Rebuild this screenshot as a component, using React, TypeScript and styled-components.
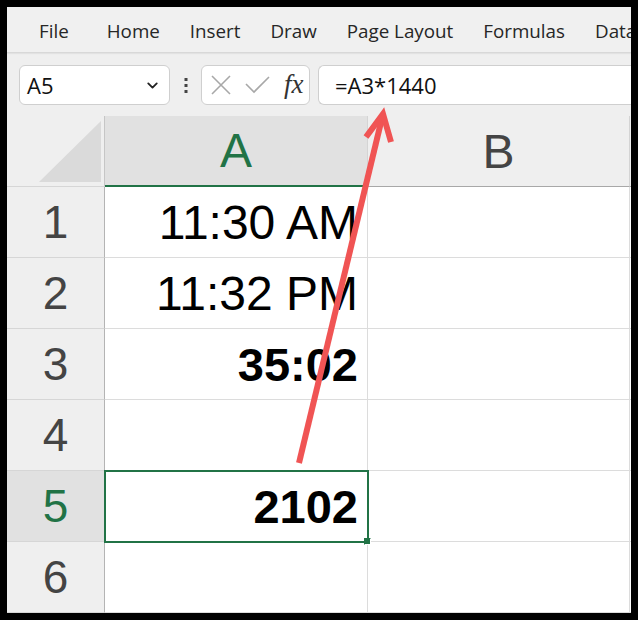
import React from 'react';
import styled, { createGlobalStyle } from 'styled-components';
import { ChevronDown } from 'lucide-react';

const Global = createGlobalStyle`
  html, body { margin: 0; padding: 0; background: #000; }
  * { box-sizing: border-box; }
`;

const Page = styled.div({
  position: 'relative',
  width: '638px',
  height: '620px',
  overflow: 'hidden',
});

const Frame = styled.div({
  width: '638px',
  height: '620px',
  border: '7px solid #000',
  background: '#efefef',
  display: 'flex',
  flexDirection: 'column',
  overflow: 'hidden',
});

const Tabs = styled.div({
  height: '46px',
  display: 'flex',
  alignItems: 'center',
  gap: '30px',
  paddingLeft: '32px',
  paddingTop: '2px',
  background: '#f0f0f0',
  borderBottom: '1px solid #d8d8d8',
  boxShadow: '0 1px 1px rgba(0,0,0,0.05)',
  whiteSpace: 'nowrap',
  fontFamily: '"Open Sans", "Noto Sans", sans-serif',
  fontSize: '18.8px',
  color: '#262626',
  flexShrink: 0,
});

const Tab = styled.span<{ $first?: boolean }>(p => ({
  marginRight: p.$first ? '8px' : 0,
}));

const FormulaBar = styled.div({
  height: '63px',
  display: 'flex',
  alignItems: 'flex-start',
  paddingTop: '12px',
  paddingLeft: '12px',
  flexShrink: 0,
});

const Field = styled.div<{ $w?: number }>(p => ({
  height: '40px',
  width: p.$w ? `${p.$w}px` : 'auto',
  flex: p.$w ? 'none' : 1,
  background: '#fff',
  border: '1px solid #cfcfcf',
  borderRadius: p.$w ? '6px' : '6px 0 0 6px',
  borderRight: p.$w ? '1px solid #cfcfcf' : 'none',
  display: 'flex',
  alignItems: 'center',
  fontFamily: '"Open Sans", "Noto Sans", sans-serif',
  fontSize: '22px',
  color: '#111',
}));

const NameText = styled.span({
  flex: 1,
  paddingLeft: '7px',
});

const Dots = styled.div({
  width: '31px',
  height: '40px',
  display: 'flex',
  alignItems: 'center',
  justifyContent: 'center',
});

const FxGroup = styled.div({
  display: 'flex',
  alignItems: 'center',
  gap: '14px',
  paddingLeft: '9px',
});

const Fx = styled.span({
  fontFamily: '"Liberation Serif", serif',
  fontStyle: 'italic',
  fontSize: '27px',
  color: '#333',
  marginTop: '-2px',
});

const FormulaText = styled.span({
  paddingLeft: '16px',
});

const Grid = styled.div({
  display: 'grid',
  gridTemplateColumns: '98px 263px 262px 1fr',
  gridTemplateRows: '71px',
  gridAutoRows: '71px',
  background: '#fff',
});

const Corner = styled.div({
  background: '#efefef',
  borderRight: '1px solid #c6c6c6',
  borderBottom: '1px solid #d6d6d6',
  display: 'flex',
  alignItems: 'flex-end',
  justifyContent: 'flex-end',
  padding: '0 3px 4px 0',
});

const ColHead = styled.div<{ $sel?: boolean }>(p => ({
  background: p.$sel ? '#e1e1e1' : '#efefef',
  borderRight: '1px solid #d4d4d4',
  borderBottom: p.$sel ? '2px solid #217346' : '1px solid #a8a8a8',
  display: 'flex',
  alignItems: 'center',
  justifyContent: 'center',
  fontFamily: '"Liberation Sans Narrow", "Liberation Sans", sans-serif',
  fontSize: '48px',
  color: p.$sel ? '#217346' : '#444',
}));

const RowHead = styled.div<{ $sel?: boolean }>(p => ({
  background: p.$sel ? '#e1e1e1' : '#efefef',
  borderRight: '1px solid #b4b4b4',
  borderBottom: '1px solid #d6d6d6',
  display: 'flex',
  alignItems: 'center',
  justifyContent: 'center',
  fontFamily: '"Liberation Sans Narrow", "Liberation Sans", sans-serif',
  fontSize: '46px',
  color: p.$sel ? '#217346' : '#444',
}));

const Cell = styled.div<{ $bold?: boolean; $sel?: boolean }>(p => ({
  position: 'relative',
  borderRight: '1px solid #dcdcdc',
  borderBottom: '1px solid #dcdcdc',
  display: 'flex',
  alignItems: 'center',
  justifyContent: 'flex-end',
  paddingRight: '9px',
  whiteSpace: 'nowrap',
  fontFamily: p.$bold
    ? '"Liberation Sans", Arial, sans-serif'
    : '"Liberation Sans Narrow", "Liberation Sans", sans-serif',
  fontWeight: p.$bold ? 700 : 400,
  fontSize: p.$bold ? '47px' : '48px',
  color: '#000',
  outline: p.$sel ? '2px solid #217346' : 'none',
  outlineOffset: '-1px',
  zIndex: p.$sel ? 1 : 0,
}));

const Handle = styled.span({
  position: 'absolute',
  right: '-4px',
  bottom: '-4px',
  width: '7px',
  height: '7px',
  background: '#217346',
  border: '1px solid #fff',
  borderTopColor: 'transparent',
  borderLeftColor: 'transparent',
});

const Overlay = styled.svg({
  position: 'absolute',
  left: 0,
  top: 0,
  pointerEvents: 'none',
});

const rows: { v: string; bold?: boolean }[] = [
  { v: '11:30 AM' },
  { v: '11:32 PM' },
  { v: '35:02', bold: true },
  { v: '' },
  { v: '2102', bold: true },
  { v: '' },
];

const tabs = ['File', 'Home', 'Insert', 'Draw', 'Page Layout', 'Formulas', 'Data'];

const App: React.FC = () => {
  return (
    <Page>
      <Global />
      <Frame>
        <Tabs>
          {tabs.map((t, i) => (
            <Tab key={t} $first={i === 0}>{t}</Tab>
          ))}
        </Tabs>
        <FormulaBar>
          <Field $w={151}>
            <NameText>A5</NameText>
            <ChevronDown size={17} strokeWidth={2.6} color="#222" style={{ marginRight: 8 }} />
          </Field>
          <Dots>
            <svg width="4" height="16" viewBox="0 0 4 16">
              <rect x="0.5" y="1" width="3" height="3" fill="#444" />
              <rect x="0.5" y="7" width="3" height="3" fill="#444" />
              <rect x="0.5" y="13" width="3" height="3" fill="#444" />
            </svg>
          </Dots>
          <Field $w={109}>
            <FxGroup>
              <svg width="20" height="20" viewBox="0 0 20 20">
                <path d="M1 1 L19 19 M19 1 L1 19" stroke="#a8a8a8" strokeWidth="1.6" fill="none" />
              </svg>
              <svg width="25" height="18" viewBox="0 0 25 18">
                <path d="M1 8 L9 16 L24 1" stroke="#a8a8a8" strokeWidth="1.6" fill="none" />
              </svg>
              <Fx>fx</Fx>
            </FxGroup>
          </Field>
          <div style={{ width: 8 }} />
          <Field>
            <FormulaText>=A3*1440</FormulaText>
          </Field>
        </FormulaBar>
        <Grid>
          <Corner>
            <svg width="62" height="61" viewBox="0 0 62 61">
              <polygon points="62,0 62,61 0,61" fill="#dadada" />
            </svg>
          </Corner>
          <ColHead $sel>A</ColHead>
          <ColHead>B</ColHead>
          <ColHead />
          {rows.map((r, i) => (
            <React.Fragment key={i}>
              <RowHead $sel={i === 4}>{i + 1}</RowHead>
              <Cell $bold={r.bold} $sel={i === 4}>
                {r.v}
                {i === 4 && <Handle />}
              </Cell>
              <Cell />
              <Cell />
            </React.Fragment>
          ))}
        </Grid>
      </Frame>
      <Overlay width="638" height="620" viewBox="0 0 638 620">
        <line x1="299" y1="463" x2="382" y2="118" stroke="#f05454" strokeWidth="6" />
        <polyline
          points="366,137 383,114 391,142"
          stroke="#f05454"
          strokeWidth="6"
          fill="none"
          strokeLinejoin="miter"
        />
      </Overlay>
    </Page>
  );
};

export default App;
